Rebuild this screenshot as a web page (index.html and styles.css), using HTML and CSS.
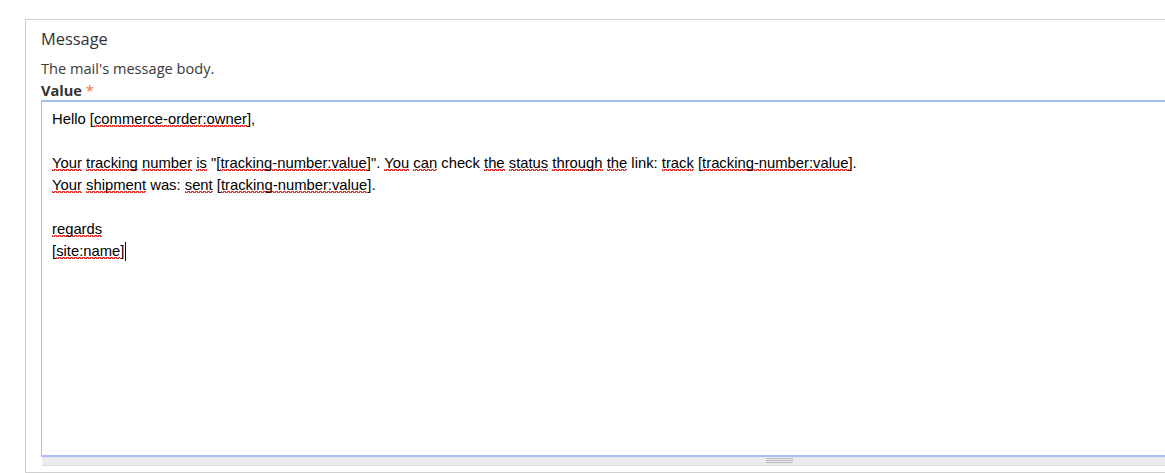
FILE: index.html
```html
<!DOCTYPE html>
<html>
<head>
<meta charset="utf-8">
<link rel="stylesheet" href="styles.css">
</head>
<body>
<div class="page">
  <div class="box">
    <div class="title">Message</div>
    <div class="desc">The mail's message body.</div>
    <div class="label">Value <span class="req">*</span></div>
    <div class="field">
      <div class="textarea">
        <div class="line">Hello [<span class="sp">commerce-order:owner</span>],</div>
        <div class="line">&nbsp;</div>
        <div class="line"><span class="sp">Your</span> <span class="sp">tracking</span> <span class="sp">number</span> <span class="sp">is</span> "[<span class="sp">tracking-number:value</span>]". <span class="sp">You</span> <span class="sp">can</span> check <span class="sp">the</span> <span class="sp">status</span> <span class="sp">through</span> <span class="sp">the</span> link: <span class="sp">track</span> [<span class="sp">tracking-number:value</span>].</div>
        <div class="line"><span class="sp">Your</span> <span class="sp">shipment</span> was: <span class="sp">sent</span> [<span class="sp">tracking-number:value</span>].</div>
        <div class="line">&nbsp;</div>
        <div class="line"><span class="sp">regards</span></div>
        <div class="line">[<span class="sp">site:name</span>]<span class="caret"></span></div>
      </div>
      <div class="grip"><span class="grip-lines"></span></div>
    </div>
  </div>
</div>
</body>
</html>
```

FILE: styles.css
```css
html, body {
  margin: 0;
  padding: 0;
  background: #fff;
  overflow: hidden;
}
.page {
  width: 1165px;
  height: 473px;
  overflow: hidden;
  padding: 19px 0 0 25px;
  box-sizing: border-box;
}
.box {
  width: 1600px;
  border: 1px solid #cfcfcf;
  border-right: none;
  padding: 8px 0 6px 15px;
  font-family: "Open Sans", sans-serif;
  color: #333;
}
.title {
  font-size: 16.4px;
  line-height: 22px;
  color: #333;
}
.desc {
  font-size: 14.6px;
  line-height: 22px;
  margin-top: 7px;
  color: #3a3a3a;
}
.label {
  font-size: 14.6px;
  line-height: 22px;
  font-weight: bold;
  color: #333;
}
.req {
  color: #e8763a;
  font-weight: normal;
}
.field {
  width: 1475px;
  margin-top: -1px;
}
.textarea {
  border: 2px solid #a3c0f3;
  border-width: 2px 2px 2px 1px;
  height: 347px;
  padding: 6px 10px 0 10px;
  font-family: "Liberation Sans", Arial, sans-serif;
  font-size: 14.8px;
  line-height: 22px;
  color: #000;
}
.line {
  white-space: pre;
}
.sp {
  background-image:
    linear-gradient(135deg, transparent 40%, #e53935 40% 75%, transparent 75%),
    linear-gradient(45deg, transparent 40%, #e53935 40% 75%, transparent 75%);
  background-size: 4px 2px;
  background-repeat: repeat-x;
  background-position: 0 100%, 2px 100%;
}
.caret {
  display: inline-block;
  width: 1px;
  height: 19px;
  background: #000;
  vertical-align: -5px;
  margin-left: 1px;
}
.grip {
  height: 7px;
  background: #ececec;
  border-bottom: 1px solid #dcdcdc;
  margin-left: 1px;
  display: flex;
  justify-content: center;
  padding-top: 1px;
}
.grip-lines {
  width: 27px;
  height: 5px;
  background: repeating-linear-gradient(to bottom, #b8b8b8 0 1px, transparent 1px 2px);
}
```
